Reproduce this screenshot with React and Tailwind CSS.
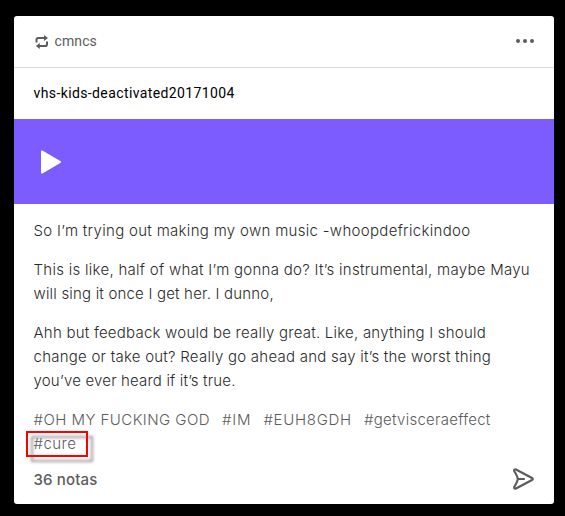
function ReblogIcon() {
  return (
    <svg width="14" height="14" viewBox="0 0 14 14" fill="none" stroke="#5c5c5c" strokeWidth="2">
      <path d="M1.5 7.5V4.8Q1.5 3 3.3 3H10M12 6.5v2.7Q12 11 10.2 11H4" />
      <path d="M9 0 13 3 9 6zM4.8 8 .8 11 4.8 14z" fill="#5c5c5c" stroke="none" />
    </svg>
  );
}

export default function App() {
  return (
    <div className="h-[516px] w-[565px] bg-black pt-4 pl-3.5 font-['Inter',sans-serif]">
      <article className="flex h-[488px] w-[540px] flex-col overflow-hidden rounded-[3px] bg-white text-[#2b2b2b]">
        <header className="flex h-[52px] shrink-0 items-center border-b border-[#dadada] pr-5 pb-px pl-[21px] text-[#5c5c5c]">
          <span className="mt-0.5"><ReblogIcon /></span>
          <span className="ml-[5.5px] font-['Roboto',sans-serif] text-sm tracking-[0.1px]">cmncs</span>
          <svg className="ml-auto" width="18" height="4" viewBox="0 0 18 4" fill="#5c5c5c">
            <circle cx="2" cy="2" r="2" />
            <circle cx="9" cy="2" r="2" />
            <circle cx="16" cy="2" r="2" />
          </svg>
        </header>
        <div className="flex h-[51px] shrink-0 items-center pb-0.5 pl-[19.5px] font-['Roboto',sans-serif] text-sm font-[450] text-black">
          <span className="tracking-[0.39px]">vhs-kids-deactivated20171004</span>
        </div>
        <div className="flex h-[85px] shrink-0 items-center bg-[#7c5cff] pl-[27px]">
          <svg width="20" height="24" viewBox="0 0 20 24" fill="white">
            <path d="M0 1.7Q0-.2 1.8.7L19.3 11Q20.8 12 19.3 13L1.8 23.3Q0 24.2 0 22.3z" />
          </svg>
        </div>
        <div className="flex flex-col gap-[15px] pt-[15px] pl-[19.5px] text-[15px] leading-6 font-light whitespace-nowrap">
          <p className="tracking-[0.31px]">So I’m trying out making my own music -whoopdefrickindoo</p>
          <p>
            <span className="tracking-[0.28px]">This is like, half of what I’m gonna do? It’s instrumental, maybe Mayu</span>
            <br />
            <span className="tracking-[0.19px]">will sing it once I get her. I dunno,</span>
          </p>
          <p>
            <span className="tracking-[0.23px]">Ahh but feedback would be really great. Like, anything I should</span>
            <br />
            <span className="tracking-[0.24px]">change or take out? Really go ahead and say it’s the worst thing</span>
            <br />
            <span className="tracking-[0.17px]">you’ve ever heard if it’s true.</span>
          </p>
          <div className="text-[#5c5c5c]">
            <div className="flex gap-3">
              <span className="tracking-[0.45px]">#OH MY FUCKING GOD</span>
              <span className="tracking-[0.8px]">#IM</span>
              <span className="tracking-[0.72px]">#EUH8GDH</span>
              <span className="tracking-[0.27px]">#getvisceraeffect</span>
            </div>
            <div className="relative">
              <span className="tracking-[0.45px]">#cure</span>
              <div className="absolute -top-px -left-[7.5px] h-[26px] w-[61.5px] border-2 border-[#f00] drop-shadow-[5px_5px_1.5px_rgba(0,0,0,0.4)]" />
            </div>
          </div>
        </div>
        <footer className="flex h-12 shrink-0 items-center justify-between pr-5 pl-[19.5px] text-[#5c5c5c]">
          <span className="text-[15px] font-medium tracking-[0.15px]">36 notas</span>
          <svg className="mb-0.5" width="21" height="22" viewBox="0 0 21 22" fill="none" stroke="#5c5c5c" strokeWidth="2.2" strokeLinecap="round" strokeLinejoin="round">
            <path d="M1.2 3Q.9.8 3 1.5L19 10Q20.6 11 19 12L3 20.5Q.9 21.2 1.2 19Q4.6 13.5 4.8 11Q4.6 8.5 1.2 3z" />
            <path d="M5 11h6" />
          </svg>
        </footer>
      </article>
    </div>
  );
}
